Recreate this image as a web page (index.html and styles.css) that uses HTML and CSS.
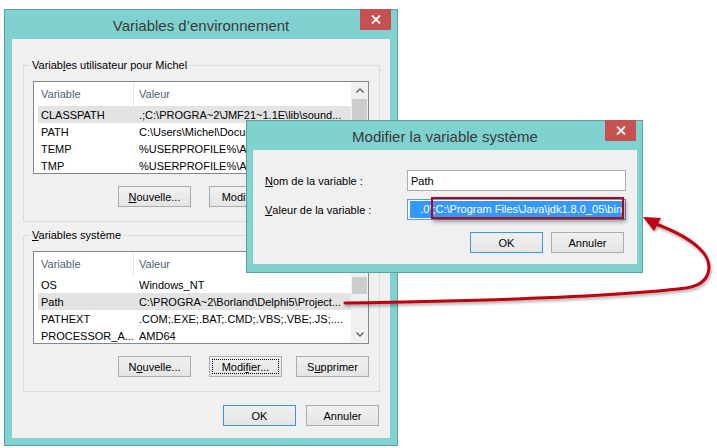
FILE: index.html
```html
<!DOCTYPE html>
<html lang="fr">
  <head>
    <meta charset="UTF-8" />
    <title>Variables d’environnement</title>
    <link rel="stylesheet" href="styles.css">
  </head>

  <body>
    <div class="desktop">
      <!-- fenêtre principale -->
      <div class="window main-window">
        <div class="titlebar">Variables d’environnement</div>
        <div class="close-btn">
          <svg width="10" height="9" viewBox="0 0 10 9"><path d="M1 0.5 L9 8.5 M9 0.5 L1 8.5" stroke="#fff" stroke-width="1.8"/></svg>
        </div>
        <div class="client main-client">
          <div class="group group-user">
            <div class="group-label">Variab<u>l</u>es utilisateur pour Michel</div>
            <div class="list">
              <div class="list-body">
                <div class="list-head">
                  <span class="head-name">Variable</span>
                  <span class="head-value">Valeur</span>
                </div>
                <div class="row selected"><span class="col-name">CLASSPATH</span><span class="col-value">.;C:\PROGRA~2\JMF21~1.1E\lib\sound...</span></div>
                <div class="row"><span class="col-name">PATH</span><span class="col-value">C:\Users\Michel\Documents\bin</span></div>
                <div class="row"><span class="col-name">TEMP</span><span class="col-value">%USERPROFILE%\AppData\Local\Temp</span></div>
                <div class="row"><span class="col-name">TMP</span><span class="col-value">%USERPROFILE%\AppData\Local\Temp</span></div>
              </div>
              <div class="scrollbar">
                <div class="scroll-arrow">
                  <svg width="8" height="5" viewBox="0 0 8 5"><path d="M0.5 4.5 L4 1 L7.5 4.5" fill="none" stroke="#606060" stroke-width="1.4"/></svg>
                </div>
                <div class="thumb thumb-user"></div>
              </div>
            </div>
            <div class="btn-row">
              <div class="btn btn-new"><span><u>N</u>ouvelle...</span></div>
              <div class="btn btn-edit"><span>Modifier...</span></div>
              <div class="btn"><span>Supprimer</span></div>
            </div>
          </div>

          <div class="group group-system">
            <div class="group-label"><u>V</u>ariables système</div>
            <div class="list">
              <div class="list-body">
                <div class="list-head">
                  <span class="head-name">Variable</span>
                  <span class="head-value">Valeur</span>
                </div>
                <div class="row"><span class="col-name">OS</span><span class="col-value">Windows_NT</span></div>
                <div class="row selected"><span class="col-name">Path</span><span class="col-value">C:\PROGRA~2\Borland\Delphi5\Project...</span></div>
                <div class="row"><span class="col-name">PATHEXT</span><span class="col-value">.COM;.EXE;.BAT;.CMD;.VBS;.VBE;.JS;....</span></div>
                <div class="row"><span class="col-name">PROCESSOR_A...</span><span class="col-value">AMD64</span></div>
              </div>
              <div class="scrollbar">
                <div class="scroll-arrow">
                  <svg width="8" height="5" viewBox="0 0 8 5"><path d="M0.5 4.5 L4 1 L7.5 4.5" fill="none" stroke="#606060" stroke-width="1.4"/></svg>
                </div>
                <div class="thumb thumb-system"></div>
                <div class="scroll-arrow scroll-arrow-down">
                  <svg width="8" height="5" viewBox="0 0 8 5"><path d="M0.5 0.5 L4 4 L7.5 0.5" fill="none" stroke="#606060" stroke-width="1.4"/></svg>
                </div>
              </div>
            </div>
            <div class="btn-row">
              <div class="btn btn-new"><span>N<u>o</u>uvelle...</span></div>
              <div class="btn btn-edit btn-focus"><span>Modi<u>f</u>ier...</span></div>
              <div class="btn"><span>S<u>u</u>pprimer</span></div>
            </div>
          </div>

          <div class="dialog-buttons main-buttons">
            <div class="btn btn-default"><span>OK</span></div>
            <div class="btn"><span>Annuler</span></div>
          </div>
        </div>
      </div>

      <!-- boîte de modification -->
      <div class="window edit-window">
        <div class="titlebar">Modifier la variable système</div>
        <div class="close-btn">
          <svg width="10" height="9" viewBox="0 0 10 9"><path d="M1 0.5 L9 8.5 M9 0.5 L1 8.5" stroke="#fff" stroke-width="1.8"/></svg>
        </div>
        <div class="client edit-client">
          <div class="form">
            <label class="form-label"><u>N</u>om de la variable :</label>
            <div class="field"><span>Path</span></div>
            <label class="form-label"><u>V</u>aleur de la variable :</label>
            <div class="field field-focus"><span class="selection">.0\;C:\Program Files\Java\jdk1.8.0_05\bin</span></div>
          </div>
          <div class="dialog-buttons edit-buttons">
            <div class="btn btn-default"><span>OK</span></div>
            <div class="btn"><span>Annuler</span></div>
          </div>
        </div>
      </div>

      <!-- annotation -->
      <div class="highlight-box"></div>
      <svg class="arrow" width="717" height="448" viewBox="0 0 717 448">
        <path d="M345 303 C480 301 620 296 686 288 C713 284 714 262 700 249 C689 238 672 230 656 224" fill="none" stroke="#c00010" stroke-width="3" stroke-linecap="round"/>
        <polygon points="643,217 661,218 654,231" fill="#c00010"/>
      </svg>
    </div>
  </body>
</html>
```

FILE: styles.css
```css
body {
  margin: 0;
  background: #fff;
  font-family: "Liberation Sans", Arial, sans-serif;
  font-size: 11px;
  color: #000;
}

.desktop {
  position: relative;
  width: 717px;
  height: 448px;
  overflow: hidden;
}

/* fenêtres */
.window {
  position: absolute;
  box-sizing: border-box;
  display: flex;
  flex-direction: column;
  border: 1px solid #5d9fa0;
  background: #7fd2d0;
}

.main-window {
  left: 4px;
  top: 9px;
  width: 394px;
  height: 437px;
  padding: 0 7px 7px 7px;
}

.edit-window {
  left: 246px;
  top: 120px;
  width: 397px;
  height: 153px;
  padding: 0 5px 8px 6px;
}

.titlebar {
  height: 29px;
  flex: none;
  display: flex;
  align-items: center;
  justify-content: center;
  font-size: 15px;
  color: #3a3a3a;
  padding-top: 1px;
  box-sizing: border-box;
}

.close-btn {
  position: absolute;
  top: -1px;
  right: 6px;
  width: 31px;
  height: 21px;
  background: #c75050;
  display: flex;
  align-items: center;
  justify-content: center;
}

.client {
  flex: 1;
  background: #f0f0f0;
  display: flex;
  flex-direction: column;
}

.main-client {
  padding: 0 10px 0 11px;
}

/* groupes */
.group {
  border: 1px solid #dcdcdc;
  display: flex;
  flex-direction: column;
  padding: 0 10px 14px 9px;
}

.group-user {
  margin-top: 26px;
}

.group-system {
  margin-top: 13px;
}

.group-label {
  align-self: flex-start;
  margin: -9px 0 0 -3px;
  padding: 0 2px;
  background: #f0f0f0;
  line-height: 16px;
}

/* listes */
.list {
  margin-top: 8px;
  height: 93px;
  box-sizing: border-box;
  border: 1px solid #828790;
  background: #fff;
  display: flex;
  overflow: hidden;
}

.list-body {
  flex: 1;
  min-width: 0;
  white-space: nowrap;
}

.list-head {
  display: flex;
  height: 24px;
  color: #4c607a;
}

.head-name {
  width: 100px;
  box-sizing: border-box;
  padding-left: 7px;
  border-right: 1px solid #e3e8ee;
  display: flex;
  align-items: center;
}

.head-value {
  padding-left: 5px;
  display: flex;
  align-items: center;
}

.row {
  display: flex;
  align-items: center;
  height: 17px;
  margin-left: 4px;
}

.row.selected {
  background: #e3e3e3;
}

.col-name {
  width: 95px;
  box-sizing: border-box;
  padding-left: 3px;
  flex: none;
}

.col-value {
  padding-left: 6px;
}

.scrollbar {
  width: 17px;
  flex: none;
  background: #f0f0f0;
  display: flex;
  flex-direction: column;
}

.scroll-arrow {
  height: 17px;
  flex: none;
  display: flex;
  align-items: center;
  justify-content: center;
}

.scroll-arrow-down {
  margin-top: auto;
}

.thumb {
  margin: 0 1px;
  background: #cdcdcd;
}

.thumb-user {
  height: 40px;
}

.thumb-system {
  margin-top: 8px;
  height: 17px;
}

/* boutons */
.btn-row {
  display: flex;
  justify-content: flex-end;
  margin-top: 12px;
}

.btn {
  position: relative;
  box-sizing: border-box;
  width: 73px;
  height: 21px;
  border: 1px solid #acacac;
  background: linear-gradient(#f0f0f0, #e5e5e5);
  display: flex;
  align-items: center;
  justify-content: center;
}

.btn-new {
  margin-right: 18px;
}

.btn-edit {
  margin-right: 14px;
}

.btn-default {
  border-color: #3c95e0;
}

.btn-focus::after {
  content: "";
  position: absolute;
  inset: 2px;
  border: 1px dotted #000;
}

.dialog-buttons {
  display: flex;
  justify-content: flex-end;
}

.main-buttons {
  margin-top: 13px;
  padding-right: 1px;
  gap: 10px;
}

/* boîte de modification */
.edit-client {
  padding: 20px 11px 0 12px;
}

.form {
  display: grid;
  grid-template-columns: 142px 219px;
  grid-auto-rows: 21px;
  row-gap: 8px;
}

.form-label {
  display: flex;
  align-items: center;
}

.field {
  box-sizing: border-box;
  border: 1px solid #abadb3;
  background: #fff;
  display: flex;
  align-items: center;
  padding: 0 3px;
  overflow: hidden;
  white-space: nowrap;
}

.field-focus {
  border-color: #569de5;
  padding: 0 2px;
}

.selection {
  flex: 1;
  text-align: right;
  background: #3399ff;
  color: #fff;
  line-height: 17px;
  padding-right: 1px;
}

.edit-buttons {
  margin-top: 12px;
  padding-right: 2px;
  gap: 8px;
}

/* annotation */
.highlight-box {
  position: absolute;
  left: 431px;
  top: 197px;
  width: 193px;
  height: 22px;
  box-sizing: border-box;
  border: 2px solid #c00010;
  box-shadow: 2px 3px 4px rgba(0, 0, 0, 0.35);
}

.arrow {
  position: absolute;
  left: 0;
  top: 0;
  pointer-events: none;
  filter: drop-shadow(1px 2px 1.5px rgba(0, 0, 0, 0.35));
}
```
